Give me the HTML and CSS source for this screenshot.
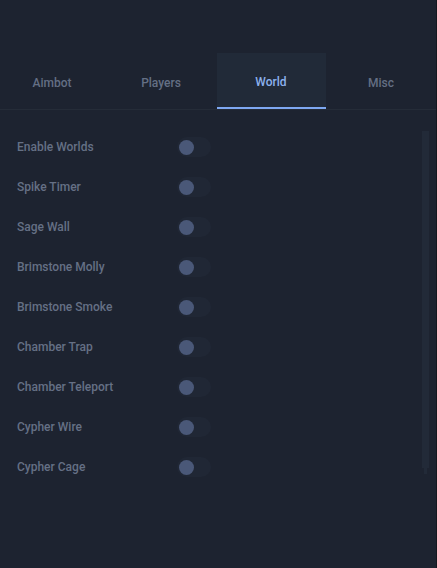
FILE: index.html
```html
<!DOCTYPE html>
<html>
<head>
<meta charset="utf-8">
<link rel="stylesheet" href="styles.css">
</head>
<body>
<div class="app">
  <div class="top"></div>
  <nav class="tabs">
    <div class="tab">Aimbot</div>
    <div class="tab">Players</div>
    <div class="tab active">World</div>
    <div class="tab last">Misc</div>
  </nav>
  <div class="content">
    <div class="list">
      <div class="row"><span class="label">Enable Worlds</span><span class="toggle"><span class="knob"></span></span></div>
      <div class="row"><span class="label">Spike Timer</span><span class="toggle"><span class="knob"></span></span></div>
      <div class="row"><span class="label">Sage Wall</span><span class="toggle"><span class="knob"></span></span></div>
      <div class="row"><span class="label">Brimstone Molly</span><span class="toggle"><span class="knob"></span></span></div>
      <div class="row"><span class="label">Brimstone Smoke</span><span class="toggle"><span class="knob"></span></span></div>
      <div class="row"><span class="label">Chamber Trap</span><span class="toggle"><span class="knob"></span></span></div>
      <div class="row"><span class="label">Chamber Teleport</span><span class="toggle"><span class="knob"></span></span></div>
      <div class="row"><span class="label">Cypher Wire</span><span class="toggle"><span class="knob"></span></span></div>
      <div class="row"><span class="label">Cypher Cage</span><span class="toggle"><span class="knob"></span></span></div>
    </div>
    <div class="scrollbar"><div class="thumb"></div><div class="thumb-end"></div></div>
  </div>
</div>
</body>
</html>
```

FILE: styles.css
```css
html, body {
  margin: 0;
  padding: 0;
  background: #1d2330;
}
body {
  width: 437px;
  height: 568px;
  overflow: hidden;
  font-family: Roboto, "Noto Sans", sans-serif;
}
.app {
  width: 436px;
  height: 568px;
  background: #1d2330;
  border-right: 1px solid #14181f;
  display: flex;
  flex-direction: column;
}
.top {
  height: 53px;
}
.tabs {
  display: grid;
  grid-template-columns: repeat(4, 109px);
  margin-left: -1px;
  height: 56px;
  border-bottom: 1px solid #252c38;
}
.tab {
  display: flex;
  align-items: center;
  justify-content: center;
  font-size: 12px;
  font-weight: 500;
  color: #646f84;
  padding-top: 4px;
  padding-right: 3px;
  box-sizing: border-box;
}
.tab.active {
  background: #212a38;
  color: #8cb1ee;
  border-bottom: 2px solid #7ea8f2;
  padding-top: 4px;
  padding-right: 1px;
}
.tab.last {
  padding-right: 0;
  padding-left: 1px;
}
.content {
  display: flex;
  flex: 1;
}
.list {
  flex: 1;
  padding-top: 17px;
  padding-left: 17px;
}
.row {
  display: flex;
  align-items: center;
  height: 40px;
}
.label {
  width: 160px;
  font-size: 12px;
  font-weight: 500;
  color: #657085;
}
.toggle {
  width: 34px;
  height: 20px;
  border-radius: 10px;
  background: #202735;
  display: flex;
  align-items: center;
  padding-left: 2px;
  box-sizing: border-box;
}
.knob {
  width: 15px;
  height: 15px;
  border-radius: 50%;
  background: #4a5878;
}
.scrollbar {
  width: 7px;
  margin-top: 21px;
  margin-right: 7px;
  display: flex;
  flex-direction: column;
  align-items: center;
}
.thumb {
  width: 7px;
  height: 337px;
  background: #222a38;
}
.thumb-end {
  width: 3px;
  height: 6px;
  background: #222a38;
}
```
